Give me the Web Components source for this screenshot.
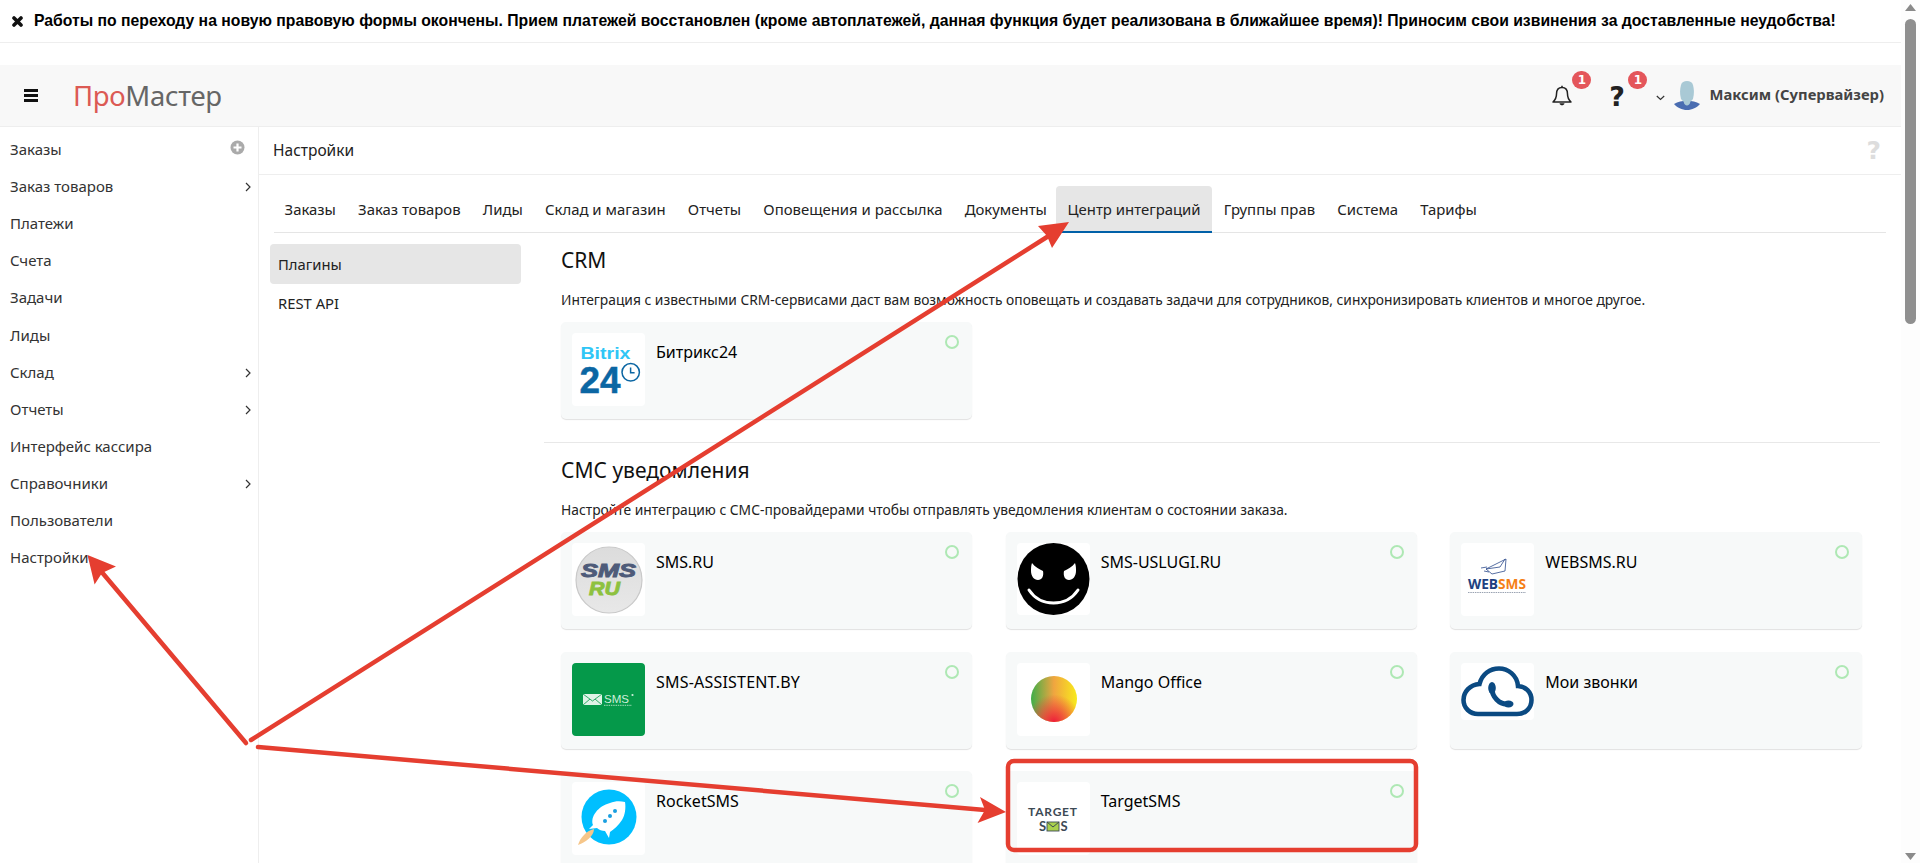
<!DOCTYPE html>
<html lang="ru"><head><meta charset="utf-8"><title>ПроМастер</title>
<style>
html,body{margin:0;padding:0;height:100%;overflow:hidden;background:#fff}
body{display:flex;font-family:"Noto Sans","Liberation Sans",sans-serif;font-size:14px;color:#222}
svg{display:block}
</style></head><body>
<x-page>
  <x-notice>Работы по переходу на новую правовую формы окончены. Прием платежей восстановлен (кроме автоплатежей, данная функция будет реализована в ближайшее время)! Приносим свои извинения за доставленные неудобства!</x-notice>
  <x-topbar></x-topbar>
  <x-layout>
    <x-sidebar slot="side">
      <x-nav-item icon="plus">Заказы</x-nav-item>
      <x-nav-item icon="chev">Заказ товаров</x-nav-item>
      <x-nav-item>Платежи</x-nav-item>
      <x-nav-item>Счета</x-nav-item>
      <x-nav-item>Задачи</x-nav-item>
      <x-nav-item>Лиды</x-nav-item>
      <x-nav-item icon="chev">Склад</x-nav-item>
      <x-nav-item icon="chev">Отчеты</x-nav-item>
      <x-nav-item>Интерфейс кассира</x-nav-item>
      <x-nav-item icon="chev">Справочники</x-nav-item>
      <x-nav-item>Пользователи</x-nav-item>
      <x-nav-item>Настройки</x-nav-item>
    </x-sidebar>
    <x-titlebar>Настройки</x-titlebar>
    <x-tabs>
      <x-tab>Заказы</x-tab><x-tab>Заказ товаров</x-tab><x-tab>Лиды</x-tab><x-tab>Склад и магазин</x-tab><x-tab>Отчеты</x-tab><x-tab>Оповещения и рассылка</x-tab><x-tab>Документы</x-tab><x-tab active>Центр интеграций</x-tab><x-tab>Группы прав</x-tab><x-tab>Система</x-tab><x-tab>Тарифы</x-tab>
    </x-tabs>
    <x-settings>
      <x-subnav slot="nav">
        <x-subitem active>Плагины</x-subitem>
        <x-subitem>REST API</x-subitem>
      </x-subnav>
      <x-section heading="CRM" text="Интеграция с известными CRM-сервисами даст вам возможность оповещать и создавать задачи для сотрудников, синхронизировать клиентов и многое другое." divider>
        <x-plugin name="Битрикс24"><svg slot="logo" viewBox="0 0 73 73" width="73" height="73"><text x="8.5" y="25.500" font-family="Liberation Sans,sans-serif" font-weight="700" font-size="17" fill="#2fc6f6" textLength="50" lengthAdjust="spacingAndGlyphs">Bitrix</text><text x="7.500" y="60" font-family="Liberation Sans,sans-serif" font-weight="700" font-size="37" fill="#0b66a3" textLength="41" lengthAdjust="spacingAndGlyphs" stroke="#0b66a3" stroke-width=".5">24</text><circle cx="58.700" cy="39.300" r="8.700" fill="none" stroke="#0b66a3" stroke-width="1.500"/><path d="M58.600 34.500v5.200h4" fill="none" stroke="#0b66a3" stroke-width="1.500"/></svg></x-plugin>
      </x-section>
      <x-section heading="СМС уведомления" text="Настройте интеграцию с СМС-провайдерами чтобы отправлять уведомления клиентам о состоянии заказа.">
        <x-plugin name="SMS.RU"><svg slot="logo" viewBox="0 0 73 73" width="73" height="73"><defs><linearGradient id="sg" x1="0" y1="0" x2="0" y2="1"><stop offset="0" stop-color="#dcdcdc"/><stop offset="1" stop-color="#e8e8e8"/></linearGradient></defs><circle cx="37" cy="37" r="33" fill="url(#sg)" stroke="#c9c9c9" stroke-width="1.200"/><text x="9" y="34" font-family="Liberation Sans,sans-serif" font-weight="700" font-style="italic" font-size="18" fill="#4e5b79" stroke="#4e5b79" stroke-width=".9" textLength="55" lengthAdjust="spacingAndGlyphs">SMS</text><text x="17" y="52" font-family="Liberation Sans,sans-serif" font-weight="700" font-style="italic" font-size="19" fill="#8dc13f" stroke="#8dc13f" stroke-width=".9" textLength="31" lengthAdjust="spacingAndGlyphs">RU</text></svg></x-plugin>
        <x-plugin name="SMS-USLUGI.RU"><svg slot="logo" viewBox="0 0 73 72" width="73" height="72"><ellipse cx="36.500" cy="36" rx="36" ry="36" fill="#000"/><path d="M15 20c3 4 7 6 11 8 1 5-1 9-5 9s-7-4-7-9c0-3 0-5 1-8zM58 20c-3 4-7 6-11 8-1 5 1 9 5 9s7-4 7-9c0-3 0-5-1-8z" fill="#fff"/><path d="M12 47c6 9 15 13 24.500 13S55 56 61 47" fill="none" stroke="#fff" stroke-width="3" stroke-linecap="round"/></svg></x-plugin>
        <x-plugin name="WEBSMS.RU"><svg slot="logo" viewBox="0 0 73 73" width="73" height="73"><path d="M25 26l20-10-1 12-13 3zM25 26l14-2 5-8M20 25l6-1M23 28l5 1" fill="none" stroke="#2c4a8c" stroke-width=".8"/><text x="7" y="46" font-family="Open Sans,sans-serif" font-weight="700" font-size="13.500" textLength="58" lengthAdjust="spacingAndGlyphs"><tspan fill="#20407f">WEB</tspan><tspan fill="#f57f17">SMS</tspan></text><path d="M7 49.500h58" stroke="#9aa3b2" stroke-width="1.200" stroke-dasharray="1.500 .8"/></svg></x-plugin>
        <x-plugin name="SMS-ASSISTENT.BY" style="--ls:.2px"><svg slot="logo" viewBox="0 0 73 73" width="73" height="73"><rect width="73" height="73" rx="2" fill="#05994a"/><rect x="11" y="31" width="19" height="11" fill="#dff3e6"/><path d="M11 31l9.500 7 9.500-7M11 42l7-6M30 42l-7-6" fill="none" stroke="#05994a" stroke-width=".8"/><text x="32" y="39.500" font-family="Liberation Sans,sans-serif" font-size="11.500" fill="#cfeeda" textLength="25" lengthAdjust="spacingAndGlyphs">SMS</text><circle cx="60.500" cy="32" r="1.100" fill="#cfeeda"/><path d="M32 42.300h28" stroke="#a5dcb9" stroke-width="1" stroke-dasharray="1.500 .8"/></svg></x-plugin>
        <x-plugin name="Mango Office"><svg slot="logo" viewBox="0 0 73 73" width="73" height="73"><defs><linearGradient id="mg" x1="0" y1="0" x2="1" y2="0"><stop offset="0" stop-color="#3fae49"/><stop offset=".5" stop-color="#f0a540"/><stop offset="1" stop-color="#f8ea1c"/></linearGradient><radialGradient id="mr" cx=".5" cy="1" r=".6"><stop offset="0" stop-color="#ee1c3a"/><stop offset=".35" stop-color="#ee3a3a" stop-opacity=".8"/><stop offset="1" stop-color="#ee3a3a" stop-opacity="0"/></radialGradient></defs><ellipse cx="37" cy="36" rx="23" ry="23" fill="url(#mg)"/><ellipse cx="37" cy="36" rx="23" ry="23" fill="url(#mr)"/></svg></x-plugin>
        <x-plugin name="Мои звонки"><svg slot="logo" viewBox="0 0 73 57" width="73" height="57"><path d="M17 51H56C65 51 70.500 44.500 70.500 37 70.500 29 64.500 23.500 57 23 56 12 47 5.500 38 5.500 29 5.500 21 11 18.500 21 9 21.500 2.500 29 2.500 37 2.500 45 9 51 17 51Z" fill="none" stroke="#0b4a82" stroke-width="4.600"/><path d="M31 26C31 33 38 42 47 41" fill="none" stroke="#0b4a82" stroke-width="5" stroke-linecap="round"/><ellipse cx="31" cy="25" rx="3.800" ry="6" fill="#0b4a82"/><ellipse cx="47.500" cy="41" rx="5" ry="3.400" fill="#0b4a82"/></svg></x-plugin>
        <x-plugin name="RocketSMS"><svg slot="logo" viewBox="0 0 73 73" width="73" height="73"><circle cx="37" cy="35" r="27.500" fill="#00bfff"/><path d="M6 63C8 56 14 49 22 47 22 54 14 60 6 63Z" fill="#f6c68a"/><path d="M21 43C18 35 26 24 38 21 43 19 48 19 53 20 54 26 53 33 50 38 46 44 42 47 38 50L37 56 33 49C30 49 27 48 25 46L17 47Z" fill="#fff"/><circle cx="43" cy="29" r="2" fill="#1a9fe0"/><circle cx="38" cy="34" r="2" fill="#1a9fe0"/><circle cx="33" cy="39" r="2" fill="#1a9fe0"/></svg></x-plugin>
        <x-plugin name="TargetSMS"><svg slot="logo" viewBox="0 0 73 73" width="73" height="73"><text x="11" y="34" font-family="Lato,sans-serif" font-weight="700" font-size="12" fill="#3d4a55" textLength="49" lengthAdjust="spacing">TARGET</text><text x="22" y="49" font-family="Lato,sans-serif" font-weight="700" font-size="13" fill="#3d4a55">S</text><rect x="30" y="40" width="12" height="9" fill="#a9d04c" stroke="#3d4a55" stroke-width=".9"/><path d="M30 40l6 5 6-5" fill="none" stroke="#3d4a55" stroke-width="1"/><text x="43.500" y="49" font-family="Lato,sans-serif" font-weight="700" font-size="13" fill="#3d4a55">S</text></svg></x-plugin>
      </x-section>
    </x-settings>
  </x-layout>
</x-page>
<x-scrollbar></x-scrollbar>
<x-arrows></x-arrows>
<script>
function def(name, css, html, init){
  customElements.define(name, class extends HTMLElement{
    constructor(){super();const r=this.attachShadow({mode:'open'});r.innerHTML='<style>'+css+'</style>'+html;}
    connectedCallback(){if(init&&!this._i){this._i=1;init(this,this.shadowRoot);}}
  });
}
def('x-page',':host{display:flex;flex-direction:column;width:1901px;height:100vh;overflow:hidden;flex:none}','<slot></slot>');
def('x-notice',':host{display:flex;align-items:center;height:42px;border-bottom:1px solid #eee;margin-bottom:22px;font:700 15.750px "Liberation Sans",sans-serif;color:#000;flex:none;white-space:nowrap}svg{margin:0 11px 0 12px;flex:none}',
 '<svg width="11" height="11" viewBox="0 0 11 11"><path d="M2 2l7 7M9 2l-7 7" stroke="#111" stroke-width="3.600" stroke-linecap="round"/></svg><slot></slot>');
def('x-topbar',`:host{display:flex;align-items:center;height:61px;background:#f8f8f8;border-bottom:1px solid #eee;flex:none;color:#222}
.ham{width:14px;margin-left:24px;display:flex;flex-direction:column;gap:2.500px;margin-top:0}.ham i{display:block;height:2.500px;background:#111}
.logo{margin-left:35px;font:27.500px/40px "Noto Sans",sans-serif;color:#666;margin-top:1px;letter-spacing:-.3px}.logo b{font-weight:400;color:#dc5a54}
.sp{flex:1}.ic{position:relative;display:flex;align-items:center;justify-content:center}
.badge{position:absolute;width:19px;height:18px;border-radius:9.500px;background:#e4565b;color:#fff;font:700 12px/18px "DejaVu Sans",sans-serif;text-align:center}
.bell{width:22px;height:22px;margin-right:35px;margin-top:1px}.bell .badge{left:21px;top:-14px}
.q{width:17px;height:24px;margin-right:31px;font:700 27px/24px "DejaVu Sans",sans-serif;color:#222;margin-top:3px}.q .badge{left:20px;top:-14px}
.chev{margin-right:9px;margin-top:5px}.ava{margin-right:9px;margin-top:-1px}
.name{font:700 14.800px "Noto Sans",sans-serif;color:#444;margin-right:17px;margin-top:-3px;white-space:nowrap}`,
`<div class="ham"><i></i><i></i><i></i></div><div class="logo"><b>Про</b>Мастер</div><div class="sp"></div>
<div class="ic bell"><svg width="22" height="22" viewBox="0 0 22 22"><path d="M11 2.500C7 2.500 5.500 5.500 5.500 9c0 4-1.300 6-3.500 8h18c-2.200-2-3.500-4-3.500-8 0-3.500-1.500-6.500-5.500-6.500z" fill="none" stroke="#222" stroke-width="1.500" stroke-linejoin="round"/><path d="M8.500 18.200c.5 2.800 4.500 2.800 5 0z" fill="#222"/><path d="M11 .8v2" stroke="#222" stroke-width="1.500"/></svg><span class="badge">1</span></div>
<div class="ic q">?<span class="badge">1</span></div>
<svg class="chev" width="9" height="6" viewBox="0 0 9 6"><path d="M.8 1l3.700 3.500L8.200 1" fill="none" stroke="#333" stroke-width="1.200"/></svg>
<svg class="ava" width="26" height="29" viewBox="0 0 26 29"><path d="M0 23c4-2.500 8-3 13-3s9 .5 13 3c-3 3.500-8 6-13 6S3 26.500 0 23z" fill="#4a6db1"/><path d="M7 18c-1.500-6-1-10 0-14 .8-3 3-4 6-4s5.200 1 6 4c1 4 1.500 8 0 14-1 1.800-3 2-3 4 0 .8-1.500 2.500-3 2.500S10 22.800 10 22c0-2-2-2.200-3-4z" fill="#a9c9d5"/></svg>
<div class="name">Максим (Супервайзер)</div>`);
def('x-layout',':host{display:grid;grid-template-columns:259px 1fr;grid-template-rows:auto auto 1fr;flex:1;min-height:0}::slotted([slot=side]){grid-row:1/4}','<slot name="side"></slot><slot></slot>');
def('x-sidebar',':host{display:block;border-right:1px solid #eee;padding-top:3.500px;box-sizing:border-box;min-height:0}','<slot></slot>');
const chev='<svg width="6" height="10" viewBox="0 0 6 10"><path d="M1 1l4 4-4 4" fill="none" stroke="#333" stroke-width="1.200"/></svg>';
const plus='<svg width="15" height="15" viewBox="0 0 15 15" style="margin-right:6px"><circle cx="7.500" cy="7.500" r="7" fill="#aaa"/><path d="M7.500 3.500v8M3.500 7.500h8" stroke="#fff" stroke-width="2.200"/></svg>';
def('x-nav-item',':host{display:flex;align-items:center;justify-content:space-between;height:37.100px;padding:0 7px 0 10px;font-size:15px;color:#333;white-space:nowrap}','<slot></slot><span id="i"></span>',
 (el,r)=>{const k=el.getAttribute('icon');r.getElementById('i').innerHTML=k==='chev'?chev:k==='plus'?plus:'';});
def('x-titlebar',':host{display:flex;align-items:center;justify-content:space-between;height:46px;padding-bottom:1px;border-bottom:1px solid #eee;padding-left:14px;padding-right:20px;font-size:15.500px;color:#222}.q{font:700 25px "DejaVu Sans",sans-serif;color:#ddd}','<slot></slot><span class="q">?</span>');
def('x-tabs',':host{display:flex;margin:11px 15px 0 14.500px;height:47px;box-sizing:border-box;border-bottom:1px solid #e5e5e5}','<slot></slot>');
def('x-tab',':host{display:flex;align-items:center;height:47px;box-sizing:border-box;padding:0 11.100px 1px;font-size:14.900px;color:#222;white-space:nowrap;border-radius:4px 4px 0 0}:host([active]){background:#e6e6e6;border-bottom:2px solid #0060a8;padding-bottom:0;margin-left:-1.500px;margin-right:1px}','<slot></slot>');
def('x-settings',':host{display:flex;min-height:0;overflow:hidden}.n{flex:none;width:251px;margin:11px 0 0 11px}.c{flex:none;width:1336px;margin-left:23px}','<div class="n"><slot name="nav"></slot></div><div class="c"><slot></slot></div>');
def('x-subnav',':host{display:block}','<slot></slot>');
def('x-subitem',':host{display:flex;align-items:center;height:37px;padding-left:8px;font-size:14.800px;color:#222;border-radius:4px}:host([active]){background:#e6e6e6;height:40px}','<slot></slot>');
def('x-section',`:host{display:block;padding:12px 0 23px 17px}:host([divider]){border-bottom:1px solid #e8e8e8}
h2{margin:0;font:400 21px/30px "Noto Sans",sans-serif;color:#111}p{margin:15px 0 12px;font-size:13.800px;line-height:20px;color:#222;white-space:nowrap}
.g{display:grid;grid-template-columns:repeat(3,411.33px);column-gap:33.33px;row-gap:22.500px}`,
 '<h2></h2><p></p><div class="g"><slot></slot></div>',
 (el,r)=>{r.querySelector('h2').textContent=el.getAttribute('heading');r.querySelector('p').textContent=el.getAttribute('text');});
def('x-plugin',`:host{display:flex;box-sizing:border-box;height:97px;background:#f7f9f9;border-radius:5px;box-shadow:0 1px 1px rgba(0,0,0,.12);padding:11px 13px 0 11px}
.l{width:73px;align-self:flex-start;background:#fff;border-radius:4px;overflow:hidden;flex:none}
.n{flex:1;margin-left:11px;margin-top:8px;font-size:16px;line-height:22px;color:#000;letter-spacing:var(--ls,0)}
.d{width:10px;height:10px;border:2px solid #aee8b4;border-radius:50%;margin-top:2px;flex:none}`,
 '<div class="l"><slot name="logo"></slot></div><div class="n"></div><div class="d"></div>',
 (el,r)=>{r.querySelector('.n').textContent=el.getAttribute('name');});
def('x-scrollbar',`:host{display:flex;flex-direction:column;align-items:center;flex:none;width:19px;height:100vh;background:#fdfdfd;box-sizing:border-box;padding:4px 0 3px;margin-left:0}
.t{width:11px;height:305px;margin-top:8px;background:#8f8f8f;border-radius:6px;flex:none}.s{flex:1}`,
 '<svg width="11" height="7" viewBox="0 0 11 7"><path d="M5.500 0L11 7H0z" fill="#8a8a8a"/></svg><div class="t"></div><div class="s"></div><svg width="11" height="7" viewBox="0 0 11 7"><path d="M5.500 7L11 0H0z" fill="#8a8a8a"/></svg>');
def('x-arrows',':host{position:absolute;left:0;top:0;width:1920px;height:863px;pointer-events:none}',
 `<svg width="1920" height="863" viewBox="0 0 1920 863" fill="none"><g stroke="#e53e30" stroke-width="4.500" stroke-linecap="round">
 <path d="M246 743L100 570"/><path d="M251 740L1047 237"/><path d="M258 747L985 810"/><rect x="1008" y="761" width="408" height="89" rx="6" stroke-width="4.500"/></g>
 <g fill="#e53e30"><path d="M87.500 555L116 566.400 102 573 94.600 584.400Z"/><path d="M1069 222L1038 226 1047 236 1052 248Z"/><path d="M1006 812L980 797 985 810 977.500 823Z"/></g></svg>`);
</script>
</body></html>
